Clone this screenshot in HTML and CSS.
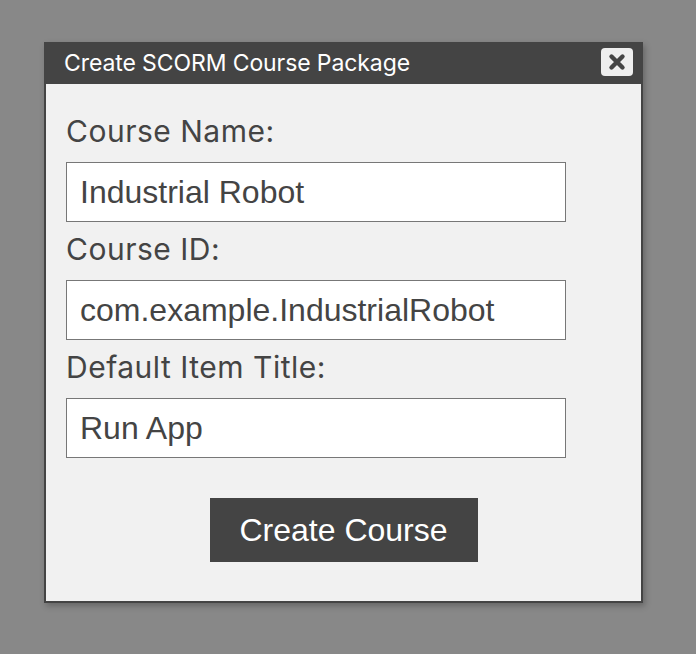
FILE: index.html
```html
<!DOCTYPE html>
<html>
<head>
<meta charset="utf-8">
<link rel="stylesheet" href="styles.css">
</head>
<body>
<div class="dialog">
  <div class="titlebar">
    <span class="title">Create SCORM Course Package</span>
    <button class="close" aria-label="Close">
      <svg width="18" height="18" viewBox="0 0 18 18"><path d="M3.5 3.5 L14.5 14.5 M14.5 3.5 L3.5 14.5" stroke="#444" stroke-width="4.4" stroke-linecap="round"/></svg>
    </button>
  </div>
  <div class="content">
    <label class="label">Course Name:</label>
    <input class="field" type="text" value="Industrial Robot">
    <label class="label">Course ID:</label>
    <input class="field" type="text" value="com.example.IndustrialRobot">
    <label class="label">Default Item Title:</label>
    <input class="field" type="text" value="Run App">
    <div class="actions">
      <button class="primary">Create Course</button>
    </div>
  </div>
</div>
</body>
</html>
```
FILE: styles.css
```css
html, body {
  margin: 0;
  padding: 0;
  background: #888888;
  width: 696px;
  height: 654px;
  overflow: hidden;
}
body {
  padding-top: 42px;
  padding-left: 44px;
  box-sizing: border-box;
}
.dialog {
  width: 599px;
  height: 561px;
  box-sizing: border-box;
  border: 2px solid #444444;
  border-top: 0;
  background: #f1f1f1;
  box-shadow: 2px 3px 6px rgba(0,0,0,0.25);
  display: flex;
  flex-direction: column;
}
.titlebar {
  height: 42px;
  background: #444444;
  margin: 0 -2px;
  padding: 0 10px 0 20px;
  display: flex;
  align-items: center;
  justify-content: space-between;
}
.title {
  color: #ffffff;
  font-family: Inter, sans-serif;
  font-size: 23px;
  letter-spacing: -0.1px;
}
.close {
  width: 32px;
  height: 28px;
  border: 0;
  border-radius: 4px;
  background: #eeeeee;
  padding: 0;
  display: flex;
  align-items: center;
  justify-content: center;
  margin-top: -2px;
}
.content {
  padding: 29px 20px 0 20px;
  display: flex;
  flex-direction: column;
  align-items: flex-start;
}
.label {
  font-family: Inter, sans-serif;
  font-size: 30px;
  line-height: 36px;
  letter-spacing: 0.5px;
  color: #444444;
  margin-bottom: 13px;
}
.field {
  width: 500px;
  height: 60px;
  box-sizing: border-box;
  border: 1px solid #777777;
  background: #ffffff;
  padding: 0 13px;
  font-family: "Liberation Sans", Arial, sans-serif;
  font-size: 32px;
  color: #444444;
  margin: 0 0 9px 0;
  outline: none;
}
.actions {
  align-self: stretch;
  display: flex;
  justify-content: center;
  margin-top: 31px;
}
.primary {
  width: 268px;
  height: 64px;
  border: 0;
  background: #444444;
  color: #ffffff;
  font-family: "Liberation Sans", Arial, sans-serif;
  font-size: 32px;
  padding: 0;
}
```
